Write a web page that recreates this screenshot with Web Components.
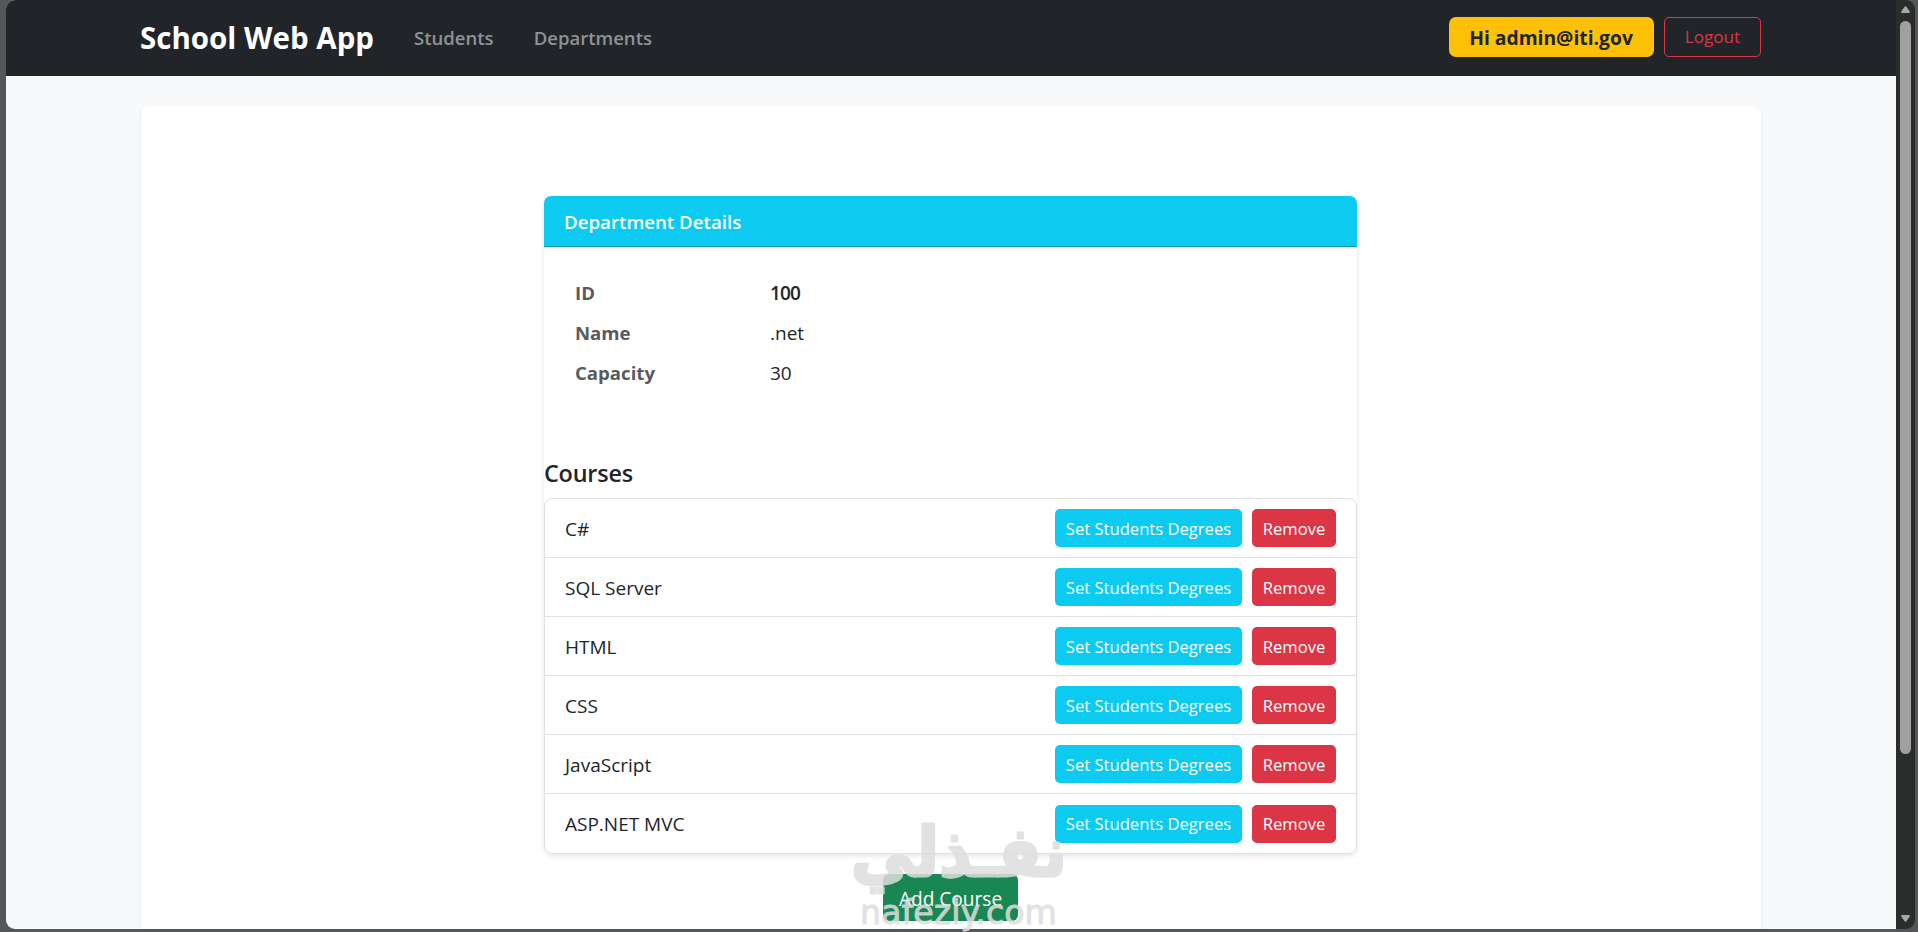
<!DOCTYPE html>
<html lang="en">
<head>
<meta charset="utf-8">
<title>Department Details</title>
<style>
    html, body {
        height: 100%;
        margin: 0;
        overflow: hidden;
    }
    body {
        font-family: "Open Sans", "Noto Sans", sans-serif;
        font-size: 19px;
        color: #212529;
        background: #555658;
    }
</style>
</head>
<body>
<school-app></school-app>

<script>
    class AppButton extends HTMLElement {
        constructor() {
            super();
            this.attachShadow({ mode: 'open' });
        }

        connectedCallback() {
            this.shadowRoot.innerHTML = `
                <style>
                    :host {
                        box-sizing: border-box;
                        display: inline-flex;
                        align-items: center;
                        justify-content: center;
                        height: 38px;
                        border-radius: 5px;
                        color: #fff;
                        font-size: 16.6px;
                        white-space: nowrap;
                        cursor: pointer;
                    }
                    :host([kind="info"]) {
                        width: 187px;
                        background: #0dcaf0;
                    }
                    :host([kind="danger"]) {
                        width: 84px;
                        background: #dc3545;
                    }
                    :host([kind="success"]) {
                        width: 135px;
                        height: 47px;
                        padding-top: 2px;
                        background: #198754;
                        font-size: 19.1px;
                        border-radius: 6px;
                    }
                    :host([kind="warning"]) {
                        width: 205px;
                        height: 40px;
                        padding: 1px 1px 0 0;
                        border-radius: 7px;
                        background: #ffc107;
                        color: #212529;
                        font-size: 19.3px;
                        font-weight: 700;
                    }
                    :host([kind="outline"]) {
                        width: 97px;
                        height: 40px;
                        padding-bottom: 1px;
                        border: 1px solid #dc3545;
                        border-radius: 5px;
                        color: #dc3545;
                        font-size: 17.1px;
                    }
                </style>
                <slot></slot>
            `;
        }
    }

    class NavBar extends HTMLElement {
        constructor() {
            super();
            this.attachShadow({ mode: 'open' });
        }

        connectedCallback() {
            this.shadowRoot.innerHTML = `
                <style>
                    :host {
                        box-sizing: border-box;
                        display: flex;
                        align-items: center;
                        height: 76px;
                        padding: 0 135px 2px 134px;
                        background: #212529;
                    }
                    .brand {
                        margin: 0 40px 0 0;
                        color: #fff;
                        font-size: 29.5px;
                        font-weight: 700;
                    }
                    nav {
                        display: flex;
                        flex: 1;
                        gap: 40px;
                        padding-top: 1px;
                        color: #909294;
                        font-size: 18.55px;
                        font-weight: 600;
                    }
                    .user {
                        display: flex;
                        gap: 10px;
                    }
                </style>
                <span class="brand">School Web App</span>
                <nav><span>Students</span><span>Departments</span></nav>
                <div class="user"><slot></slot></div>
            `;
        }
    }

    class DetailRow extends HTMLElement {
        constructor() {
            super();
            this.attachShadow({ mode: 'open' });
        }

        connectedCallback() {
            this.shadowRoot.innerHTML = `
                <style>
                    :host {
                        display: grid;
                        grid-template-columns: 195px 1fr;
                        line-height: 40px;
                    }
                    .label {
                        color: #585b5e;
                        font-size: 18.6px;
                        font-weight: 700;
                    }
                    :host([strong]) .value {
                        font-weight: 600;
                        letter-spacing: -.9px;
                    }
                </style>
                <span class="label">${this.getAttribute('label')}</span>
                <span class="value"><slot></slot></span>
            `;
        }
    }

    class CourseItem extends HTMLElement {
        constructor() {
            super();
            this.attachShadow({ mode: 'open' });
        }

        connectedCallback() {
            this.shadowRoot.innerHTML = `
                <style>
                    :host {
                        box-sizing: border-box;
                        display: flex;
                        align-items: center;
                        gap: 10px;
                        height: 59.1px;
                        padding: 0 20px;
                        border-bottom: 1px solid #dee0e2;
                    }
                    :host(:last-child) {
                        height: 58.1px;
                        border-bottom: 0;
                    }
                    .name {
                        flex: 1;
                        padding-top: 1px;
                    }
                </style>
                <span class="name"><slot></slot></span>
                <app-button kind="info">Set Students Degrees</app-button>
                <app-button kind="danger">Remove</app-button>
            `;
        }
    }

    class CourseList extends HTMLElement {
        constructor() {
            super();
            this.attachShadow({ mode: 'open' });
        }

        connectedCallback() {
            this.shadowRoot.innerHTML = `
                <style>
                    :host {
                        display: block;
                        border: 1px solid #dee0e2;
                        border-radius: 8px;
                        background: #fff;
                    }
                </style>
                <slot></slot>
            `;
        }
    }

    class DepartmentCard extends HTMLElement {
        constructor() {
            super();
            this.attachShadow({ mode: 'open' });
        }

        connectedCallback() {
            this.shadowRoot.innerHTML = `
                <style>
                    :host {
                        display: block;
                        width: 813px;
                        border-radius: 8px;
                        box-shadow: 0 2px 5px rgba(0, 0, 0, .1);
                    }
                    header {
                        box-sizing: border-box;
                        height: 51px;
                        padding-left: 20px;
                        border-bottom: 1px solid #1797b5;
                        border-radius: 7px 7px 0 0;
                        background: #0dcaf0;
                        color: #fff;
                        font-size: 18.7px;
                        font-weight: 600;
                        line-height: 51px;
                    }
                    .details {
                        box-sizing: border-box;
                        height: 210px;
                        padding: 26px 30px 0 31px;
                    }
                    h5 {
                        height: 41px;
                        margin: 0;
                        font-size: 23.4px;
                        font-weight: 600;
                        letter-spacing: -.2px;
                        line-height: 32px;
                    }
                </style>
                <header>Department Details</header>
                <div class="details"><slot name="details"></slot></div>
                <h5>Courses</h5>
                <slot></slot>
            `;
        }
    }

    class ScrollRail extends HTMLElement {
        constructor() {
            super();
            this.attachShadow({ mode: 'open' });
        }

        connectedCallback() {
            this.shadowRoot.innerHTML = `
                <style>
                    :host {
                        box-sizing: border-box;
                        display: flex;
                        flex-direction: column;
                        width: 19px;
                        padding: 6px 4px 7px;
                        background: #2b2c2c;
                    }
                    .thumb {
                        width: 11px;
                        height: 733px;
                        margin: 8px 0 auto;
                        border-radius: 6px;
                        background: #a0a0a0;
                    }
                    svg {
                        display: block;
                        fill: #a8a8a8;
                    }
                </style>
                <svg width="11" height="7"><path d="M4.6 .8Q5.5 -.5 6.4 .8L9.8 5.6Q10.2 7 9 7H2Q.8 7 1.2 5.6Z"/></svg>
                <div class="thumb"></div>
                <svg width="11" height="7"><path d="M4.6 6.2Q5.5 7.5 6.4 6.2L9.8 1.4Q10.2 0 9 0H2Q.8 0 1.2 1.4Z"/></svg>
            `;
        }
    }

    class SiteWatermark extends HTMLElement {
        constructor() {
            super();
            this.attachShadow({ mode: 'open' });
        }

        connectedCallback() {
            this.shadowRoot.innerHTML = `
                <style>
                    :host {
                        position: absolute;
                        left: 850px;
                        top: 815px;
                        opacity: .85;
                        pointer-events: none;
                    }
                    svg {
                        display: block;
                        overflow: visible;
                    }
                    text {
                        fill: #dedede;
                        stroke: #dedede;
                        stroke-linejoin: round;
                    }
                    .ar {
                        font: 700 60px "DejaVu Sans", sans-serif;
                        stroke-width: 2.5px;
                    }
                    .en {
                        font: 400 33px "DejaVu Sans", sans-serif;
                        stroke-width: 1px;
                    }
                </style>
                <svg width="220" height="117">
                    <text class="ar" text-anchor="middle" transform="translate(109 61) scale(1.06 1.15)">نفـذلي</text>
                    <text class="en" x="10" y="109" textLength="197" lengthAdjust="spacingAndGlyphs">nafezly.com</text>
                </svg>
            `;
        }
    }

    class SchoolApp extends HTMLElement {
        constructor() {
            super();
            this.attachShadow({ mode: 'open' });
        }

        connectedCallback() {
            const courses = ['C#', 'SQL Server', 'HTML', 'CSS', 'JavaScript', 'ASP.NET MVC'];
            this.shadowRoot.innerHTML = `
                <style>
                    :host {
                        box-sizing: border-box;
                        display: block;
                        height: 100vh;
                        padding: 0 3px 3px 6px;
                    }
                    .window {
                        display: grid;
                        grid-template-columns: 1fr 19px;
                        height: 100%;
                        overflow: hidden;
                        border-radius: 9px;
                    }
                    .page {
                        display: flex;
                        flex-direction: column;
                        min-height: 0;
                        overflow: hidden;
                        background: #f8f9fb;
                    }
                    nav-bar {
                        flex: none;
                    }
                    main {
                        box-sizing: border-box;
                        display: flex;
                        flex: none;
                        flex-direction: column;
                        align-items: center;
                        gap: 20.5px;
                        height: 900px;
                        margin: 30px 135px 0;
                        padding: 90px 1px 0 0;
                        border-radius: 8px;
                        background: #fff;
                        box-shadow: 0 2px 5px rgba(0, 0, 0, .075);
                    }
                </style>
                <div class="window">
                    <div class="page">
                        <nav-bar>
                            <app-button kind="warning">Hi admin@iti.gov</app-button>
                            <app-button kind="outline">Logout</app-button>
                        </nav-bar>
                        <main>
                            <department-card>
                                <detail-row slot="details" label="ID" strong>100</detail-row>
                                <detail-row slot="details" label="Name">.net</detail-row>
                                <detail-row slot="details" label="Capacity">30</detail-row>
                                <course-list>${courses.map(name => `<course-item>${name}</course-item>`).join('')}</course-list>
                            </department-card>
                            <app-button kind="success">Add Course</app-button>
                        </main>
                    </div>
                    <scroll-rail></scroll-rail>
                </div>
                <site-watermark></site-watermark>
            `;
        }
    }

    window.customElements.define('app-button', AppButton);
    window.customElements.define('nav-bar', NavBar);
    window.customElements.define('detail-row', DetailRow);
    window.customElements.define('course-item', CourseItem);
    window.customElements.define('course-list', CourseList);
    window.customElements.define('department-card', DepartmentCard);
    window.customElements.define('scroll-rail', ScrollRail);
    window.customElements.define('site-watermark', SiteWatermark);
    window.customElements.define('school-app', SchoolApp);
</script>
</body>
</html>
